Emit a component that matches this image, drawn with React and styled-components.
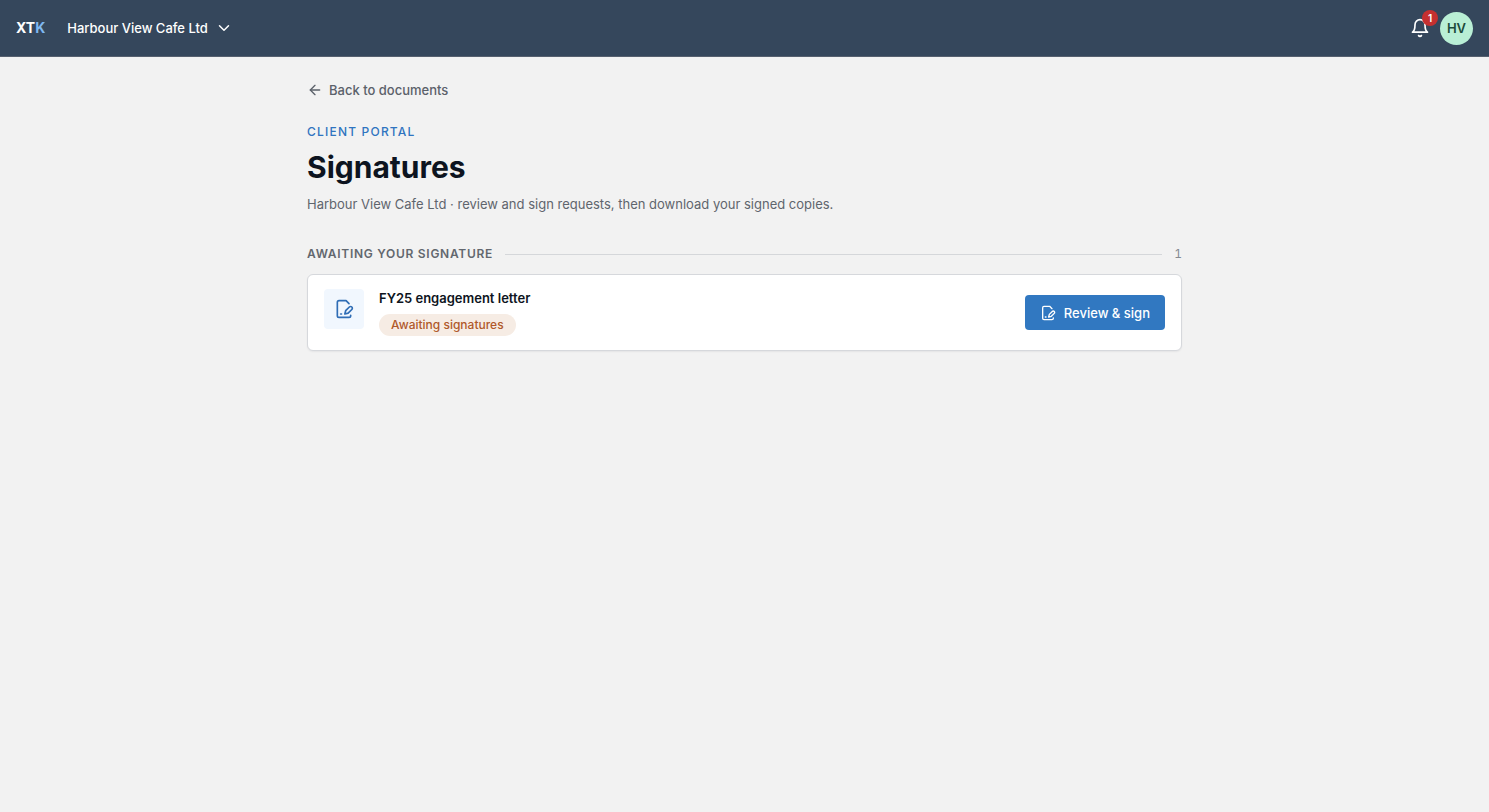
import React from "react";
import styled, { createGlobalStyle } from "styled-components";
import { ArrowLeft, ChevronDown } from "lucide-react";

const GlobalStyle = createGlobalStyle`
  *, *::before, *::after { box-sizing: border-box; }
  body {
    margin: 0;
    background: #f2f2f2;
    color: #0d1420;
    font-family: Inter, "Liberation Sans", sans-serif;
    font-size: 13px;
    line-height: 20px;
  }
  button { font: inherit; cursor: pointer; }
  h1, h2, h3, p { margin: 0; }
`;

const TopBar = styled.header`
  display: flex;
  align-items: center;
  justify-content: space-between;
  height: 57px;
  padding: 0 16px;
  background: #35475c;
  border-bottom: 1px solid #56606f;
`;

const BarGroup = styled.div`
  display: flex;
  align-items: center;
  gap: ${({ $gap }) => $gap}px;
`;

const Logo = styled.a`
  color: #ffffff;
  font-size: 14px;
  font-weight: 700;
  text-decoration: none;

  span { color: #7fb8f0; }
`;

const ClientSwitcher = styled.button`
  display: flex;
  align-items: center;
  gap: 7px;
  padding: 0;
  border: 0;
  background: none;
  color: #ffffff;
  font-size: 13px;
  font-weight: 500;
`;

const BellButton = styled.button`
  position: relative;
  display: grid;
  place-items: center;
  width: 32px;
  height: 32px;
  padding: 0;
  border: 0;
  background: none;
  color: #ffffff;
`;

const BellCount = styled.span`
  position: absolute;
  top: -2px;
  right: -2px;
  width: 16px;
  height: 16px;
  border-radius: 8px;
  background: #c53030;
  color: #ffffff;
  font-size: 10px;
  font-weight: 600;
  line-height: 16px;
  text-align: center;
`;

const Avatar = styled.button`
  width: 33px;
  height: 33px;
  padding: 0;
  border: 0;
  border-radius: 50%;
  background: #b9efd5;
  color: #1d4b3b;
  font-size: 13px;
  font-weight: 600;
`;

const Page = styled.main`
  max-width: 923px;
  margin: 0 auto;
  padding: 23px 24px;
`;

const BackLink = styled.a`
  display: flex;
  align-items: center;
  gap: 6px;
  width: fit-content;
  color: #5b616a;
  font-size: 13px;
  font-weight: 500;
  text-decoration: none;
`;

const PageHeading = styled.div`
  display: grid;
  margin-top: 22px;
`;

const Eyebrow = styled.p`
  color: #2f74c0;
  font-size: 12px;
  font-weight: 500;
  letter-spacing: 0.1em;
  text-transform: uppercase;
`;

const Title = styled.h1`
  margin-top: 5px;
  font-size: 30px;
  font-weight: 700;
  line-height: 40px;
`;

const Intro = styled.p`
  margin-top: 7px;
  color: #5f656d;
  font-size: 13px;
`;

const SectionHeader = styled.div`
  display: flex;
  align-items: center;
  gap: 12px;
  margin-top: 30px;
`;

const SectionTitle = styled.h2`
  color: #62676e;
  font-size: 12px;
  font-weight: 600;
  line-height: 20px;
  letter-spacing: 0.06em;
  text-transform: uppercase;
`;

const Rule = styled.span`
  flex: 1;
  height: 1px;
  background: #d5d7da;
`;

const SectionCount = styled.span`
  color: #858a91;
  font-size: 12px;
  font-variant-numeric: tabular-nums;
`;

const RequestCard = styled.article`
  display: flex;
  align-items: center;
  justify-content: space-between;
  margin-top: 10px;
  padding: 14px 16px;
  border: 1px solid #d6d8dc;
  border-radius: 6px;
  background: #ffffff;
  box-shadow: 0 1px 2px rgba(16, 24, 40, 0.06);
`;

const RequestInfo = styled.div`
  display: flex;
  align-items: flex-start;
  gap: 15px;
`;

const IconTile = styled.span`
  display: grid;
  place-items: center;
  width: 40px;
  height: 40px;
  border-radius: 4px;
  background: #f1f7fe;
  color: #2f6db5;
`;

const RequestText = styled.div`
  display: grid;
  justify-items: start;
  gap: 6px;
`;

const RequestName = styled.h3`
  font-size: 13px;
  font-weight: 600;
  line-height: 19px;
`;

const StatusPill = styled.span`
  padding: 0 12px;
  border-radius: 11px;
  background: #f6ece4;
  color: #b0592b;
  font-size: 12px;
  font-weight: 500;
  line-height: 22px;
`;

const PrimaryButton = styled.button`
  display: inline-flex;
  align-items: center;
  gap: 8px;
  height: 35px;
  padding: 0 15px;
  border: 0;
  border-radius: 4px;
  background: #3178c1;
  color: #ffffff;
  font-size: 13px;
  font-weight: 500;
`;

const StrokeIcon = styled.svg.attrs({
  viewBox: "0 0 24 24",
  fill: "none",
  stroke: "currentColor",
  strokeWidth: 2,
  strokeLinecap: "round",
  strokeLinejoin: "round",
  "aria-hidden": true,
})`
  flex: none;
`;

function BellIcon({ size }) {
  return (
    <StrokeIcon width={size} height={size}>
      <path d="M6 8a6 6 0 0 1 12 0c0 7 3 9 3 9H3s3-2 3-9" />
      <path d="M10.3 21a1.94 1.94 0 0 0 3.4 0" />
    </StrokeIcon>
  );
}

function SignatureIcon({ size }) {
  return (
    <StrokeIcon width={size} height={size}>
      <path d="M20 19.5v.5a2 2 0 0 1-2 2H6a2 2 0 0 1-2-2V4a2 2 0 0 1 2-2h8.5L18 5.5" />
      <path d="M8 18h1" />
      <path d="M18.42 9.61a2.1 2.1 0 1 1 2.97 2.97L16.95 17 13 18l.99-3.95 4.43-4.44Z" />
    </StrokeIcon>
  );
}

export default function App() {
  return (
    <>
      <GlobalStyle />
      <TopBar>
        <BarGroup $gap={22}>
          <Logo href="#home">
            XT<span>K</span>
          </Logo>
          <ClientSwitcher type="button">
            Harbour View Cafe Ltd
            <ChevronDown size={18} strokeWidth={2} aria-hidden="true" />
          </ClientSwitcher>
        </BarGroup>
        <BarGroup $gap={4}>
          <BellButton type="button" aria-label="Notifications">
            <BellIcon size={20} />
            <BellCount>1</BellCount>
          </BellButton>
          <Avatar type="button">HV</Avatar>
        </BarGroup>
      </TopBar>
      <Page>
        <BackLink href="#documents">
          <ArrowLeft size={16} aria-hidden="true" />
          Back to documents
        </BackLink>
        <PageHeading>
          <Eyebrow>Client portal</Eyebrow>
          <Title>Signatures</Title>
          <Intro>
            Harbour View Cafe Ltd · review and sign requests, then download your signed copies.
          </Intro>
        </PageHeading>
        <section>
          <SectionHeader>
            <SectionTitle>Awaiting your signature</SectionTitle>
            <Rule />
            <SectionCount>1</SectionCount>
          </SectionHeader>
          <RequestCard>
            <RequestInfo>
              <IconTile>
                <SignatureIcon size={20} />
              </IconTile>
              <RequestText>
                <RequestName>FY25 engagement letter</RequestName>
                <StatusPill>Awaiting signatures</StatusPill>
              </RequestText>
            </RequestInfo>
            <PrimaryButton type="button">
              <SignatureIcon size={16} />
              Review &amp; sign
            </PrimaryButton>
          </RequestCard>
        </section>
      </Page>
    </>
  );
}
